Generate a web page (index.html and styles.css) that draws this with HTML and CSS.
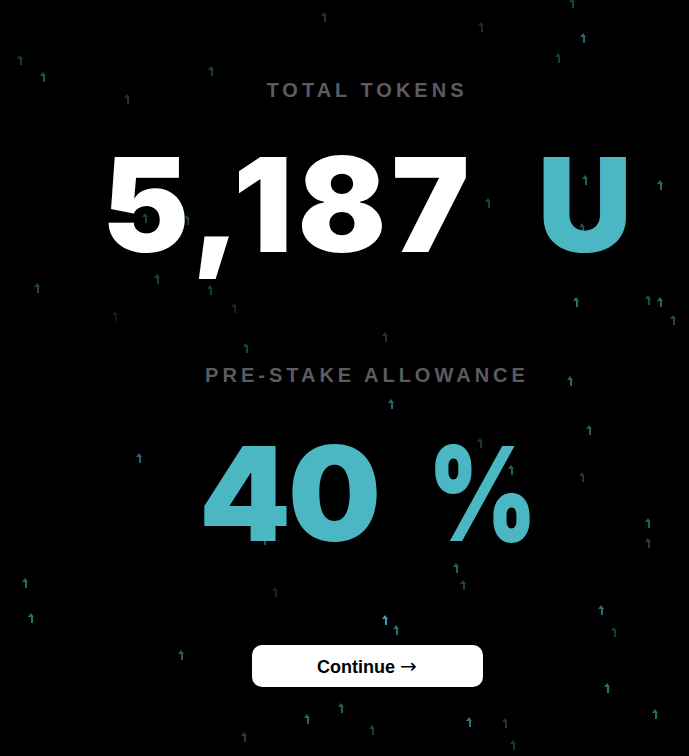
FILE: index.html
```html
<!DOCTYPE html>
<html lang="en">
<head>
<meta charset="utf-8">
<title>Total Tokens</title>
<link rel="stylesheet" href="styles.css">
</head>
<body>
<main class="stage">
  <section class="stat">
    <p class="label">TOTAL TOKENS</p>
    <p class="value"><span class="num">5,187</span><span class="unit">U</span></p>
  </section>
  <section class="stat stat-second">
    <p class="label">PRE-STAKE ALLOWANCE</p>
    <p class="value value-teal"><span class="num num-tight">40 <span class="pct">%</span></span></p>
  </section>
  <button class="continue" type="button">Continue <span class="arrow">→</span></button>
</main>
<div class="particles" aria-hidden="true">
  <span class="p" style="left:569px;top:-2px;opacity:.35"></span>
  <span class="p" style="left:321px;top:12px;opacity:.3"></span>
  <span class="p" style="left:17px;top:55px;opacity:.3"></span>
  <span class="p" style="left:40px;top:72px;opacity:.45"></span>
  <span class="p" style="left:208px;top:66px;opacity:.35"></span>
  <span class="p" style="left:124px;top:94px;opacity:.3"></span>
  <span class="p" style="left:580px;top:33px;opacity:.55"></span>
  <span class="p" style="left:555px;top:53px;opacity:.3"></span>
  <span class="p" style="left:478px;top:22px;opacity:.25"></span>
  <span class="p" style="left:582px;top:175px;opacity:.5"></span>
  <span class="p" style="left:657px;top:180px;opacity:.55"></span>
  <span class="p" style="left:485px;top:198px;opacity:.35"></span>
  <span class="p" style="left:579px;top:223px;opacity:.4"></span>
  <span class="p p-dark" style="left:142px;top:213px"></span>
  <span class="p p-dark" style="left:184px;top:215px"></span>
  <span class="p" style="left:34px;top:283px;opacity:.4"></span>
  <span class="p" style="left:154px;top:274px;opacity:.35"></span>
  <span class="p" style="left:207px;top:285px;opacity:.3"></span>
  <span class="p" style="left:231px;top:303px;opacity:.2"></span>
  <span class="p" style="left:112px;top:311px;opacity:.15"></span>
  <span class="p" style="left:573px;top:297px;opacity:.6"></span>
  <span class="p" style="left:645px;top:295px;opacity:.4"></span>
  <span class="p" style="left:657px;top:297px;opacity:.55"></span>
  <span class="p" style="left:670px;top:315px;opacity:.4"></span>
  <span class="p" style="left:382px;top:332px;opacity:.3"></span>
  <span class="p" style="left:243px;top:343px;opacity:.35"></span>
  <span class="p" style="left:567px;top:376px;opacity:.55"></span>
  <span class="p" style="left:388px;top:399px;opacity:.55"></span>
  <span class="p" style="left:586px;top:425px;opacity:.5"></span>
  <span class="p" style="left:477px;top:438px;opacity:.3"></span>
  <span class="p" style="left:136px;top:453px;opacity:.55"></span>
  <span class="p" style="left:508px;top:465px;opacity:.5"></span>
  <span class="p" style="left:579px;top:472px;opacity:.3"></span>
  <span class="p" style="left:261px;top:535px;opacity:.5"></span>
  <span class="p" style="left:645px;top:518px;opacity:.5"></span>
  <span class="p" style="left:645px;top:538px;opacity:.35"></span>
  <span class="p" style="left:453px;top:563px;opacity:.5"></span>
  <span class="p" style="left:460px;top:580px;opacity:.35"></span>
  <span class="p" style="left:22px;top:578px;opacity:.55"></span>
  <span class="p" style="left:272px;top:587px;opacity:.2"></span>
  <span class="p" style="left:28px;top:613px;opacity:.6"></span>
  <span class="p" style="left:598px;top:605px;opacity:.6"></span>
  <span class="p" style="left:382px;top:615px;opacity:.85"></span>
  <span class="p" style="left:393px;top:625px;opacity:.6"></span>
  <span class="p" style="left:611px;top:627px;opacity:.3"></span>
  <span class="p" style="left:178px;top:650px;opacity:.5"></span>
  <span class="p" style="left:604px;top:683px;opacity:.6"></span>
  <span class="p" style="left:338px;top:703px;opacity:.5"></span>
  <span class="p" style="left:304px;top:714px;opacity:.55"></span>
  <span class="p" style="left:466px;top:717px;opacity:.6"></span>
  <span class="p" style="left:502px;top:718px;opacity:.3"></span>
  <span class="p" style="left:652px;top:709px;opacity:.55"></span>
  <span class="p" style="left:369px;top:725px;opacity:.35"></span>
  <span class="p" style="left:241px;top:732px;opacity:.35"></span>
  <span class="p" style="left:510px;top:740px;opacity:.3"></span>
</div>
</body>
</html>
```
FILE: styles.css
```css
html, body {
  margin: 0;
  padding: 0;
  background: #000;
}

body {
  min-height: 756px;
  position: relative;
  overflow: hidden;
  font-family: "Liberation Sans", Arial, sans-serif;
}

.stage {
  box-sizing: border-box;
  width: 689px;
  padding: 78px 0 0 45px;
  display: flex;
  flex-direction: column;
  align-items: center;
}

.stat {
  display: flex;
  flex-direction: column;
  align-items: center;
}

.stat-second {
  margin-top: 93px;
}

.label {
  margin: 0;
  font-size: 20px;
  line-height: 24px;
  font-weight: 700;
  letter-spacing: 4px;
  color: #5b5b61;
  white-space: nowrap;
}

.value {
  margin: 37px 0 0;
  font-family: Inter, "Liberation Sans", sans-serif;
  font-weight: 900;
  font-size: 131px;
  line-height: 131px;
  color: #fff;
  white-space: nowrap;
  display: flex;
  align-items: baseline;
}

.stat-second .value {
  margin-top: 41px;
}

.num {
  letter-spacing: 5px;
}

.num-tight {
  letter-spacing: -3px;
}

.pct {
  display: inline-block;
  transform: scaleX(0.8);
  transform-origin: right center;
}

.unit {
  color: #4ab7c3;
  margin-left: 63px;
}

.value-teal {
  color: #4ab7c3;
}

.continue {
  margin-top: 86px;
  width: 231px;
  height: 42px;
  border: 0;
  border-radius: 10px;
  background: #fff;
  color: #000;
  font-family: "Liberation Sans", Arial, sans-serif;
  font-weight: 700;
  font-size: 18px;
  padding: 0;
  cursor: pointer;
}

.arrow {
  font-family: "DejaVu Sans", sans-serif;
  font-weight: 400;
  font-size: 20px;
}

.particles {
  position: absolute;
  inset: 0;
  pointer-events: none;
  z-index: 2;
}

.p {
  position: absolute;
  width: 7px;
  height: 10px;
  color: #4ab7c3;
}

.p::before {
  content: "";
  position: absolute;
  left: 0;
  top: 0;
  border-left: 3.5px solid transparent;
  border-right: 3.5px solid transparent;
  border-bottom: 4px solid currentColor;
}

.p::after {
  content: "";
  position: absolute;
  left: 2.5px;
  top: 4px;
  width: 2px;
  height: 6px;
  background: currentColor;
}

.p-dark {
  color: #1d3a3e;
}
```
